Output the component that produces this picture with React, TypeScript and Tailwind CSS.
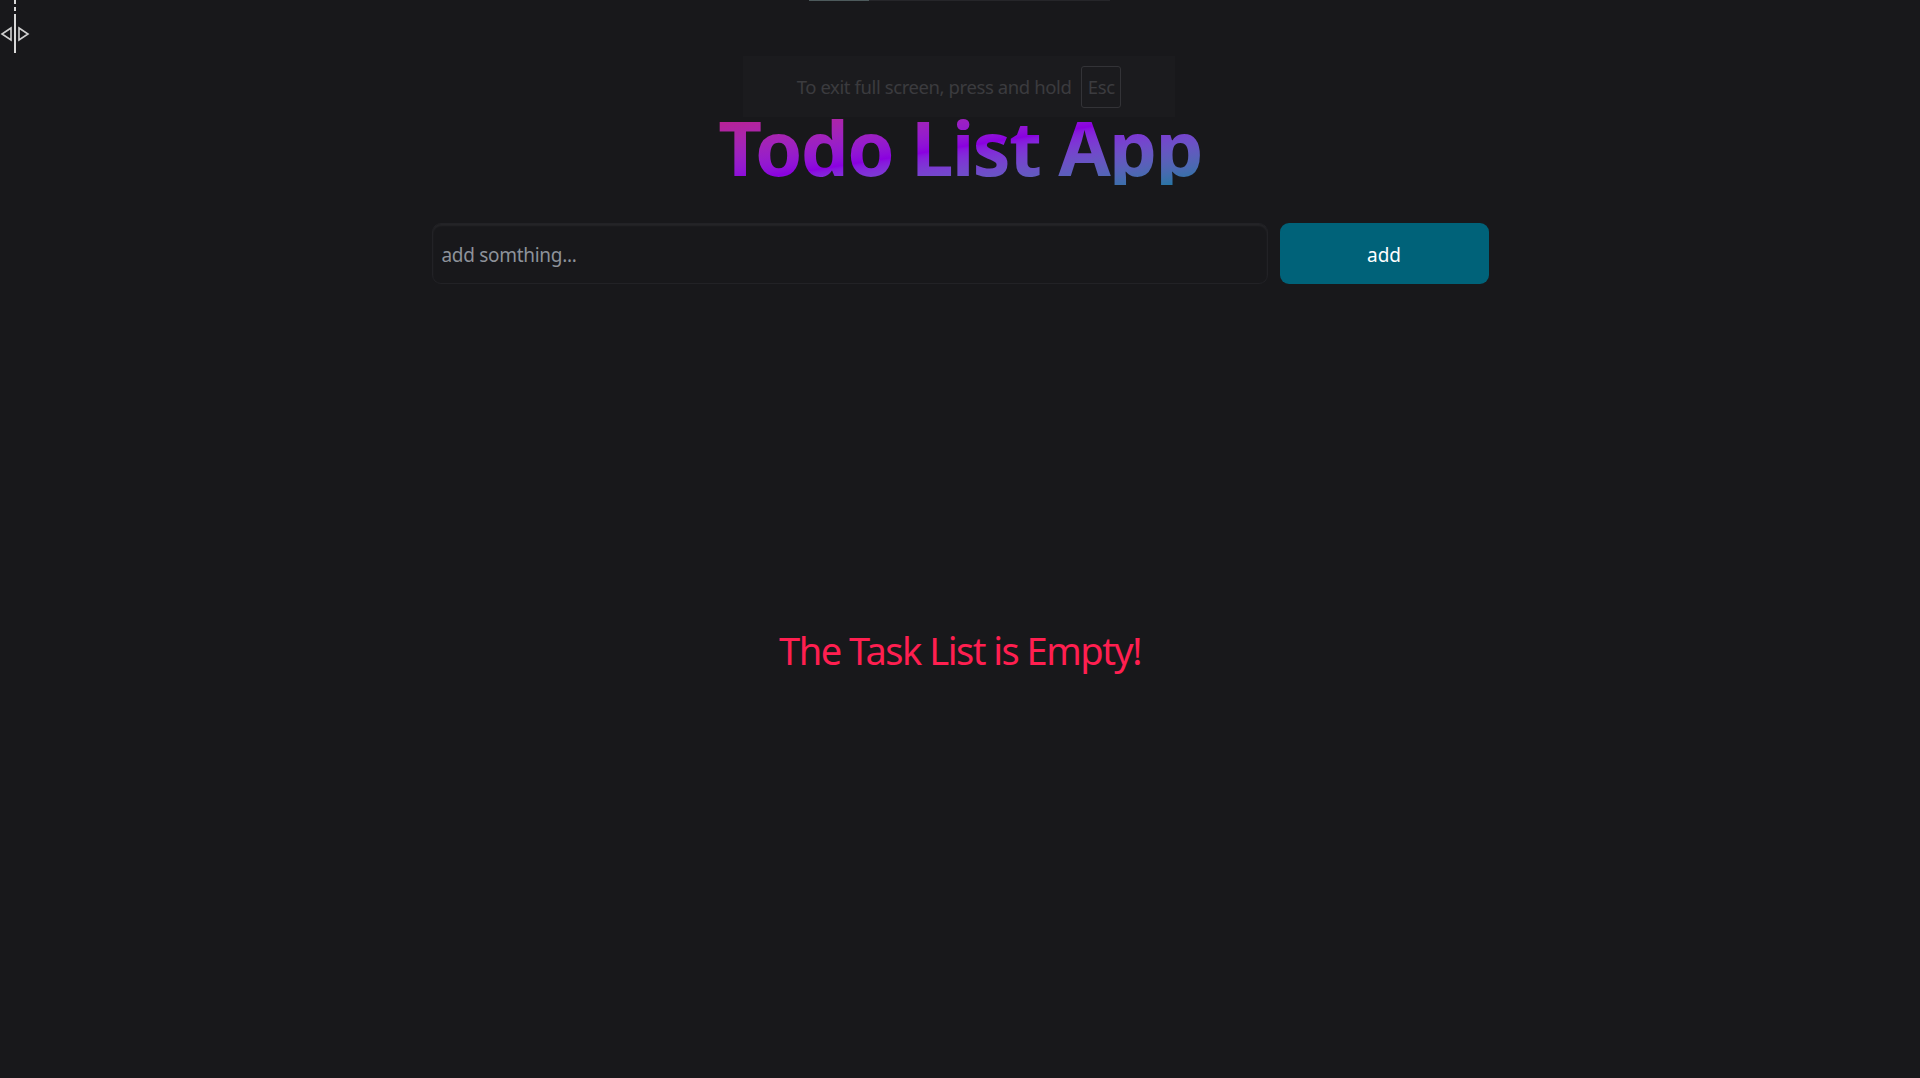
import React from "react";

export default function App() {
  return (
    <div
      className="relative min-h-[1078px] w-full overflow-hidden bg-[#18181b]"
      style={{ fontFamily: '"Noto Sans", "Open Sans", sans-serif' }}
    >
      {/* top thin bar */}
      <div className="absolute left-[809px] top-0 flex h-[1px] w-[301px] bg-[#26262a]">
        <div className="h-full w-[60px] bg-[#4d5a5c]" />
      </div>

      {/* cursor */}
      <svg className="absolute left-0 top-0" width="32" height="56" viewBox="0 0 32 56">
        <line x1="15" y1="0" x2="15" y2="4" stroke="#d8d8d8" strokeWidth="2" />
        <line x1="15" y1="7" x2="15" y2="11" stroke="#d8d8d8" strokeWidth="2" />
        <line x1="15" y1="14" x2="15" y2="53" stroke="#d8d8d8" strokeWidth="2" />
        <path d="M11 28 L2 34 L11 40 Z" fill="none" stroke="#d0d0d0" strokeWidth="1.6" />
        <path d="M19 28 L28 34 L19 40 Z" fill="none" stroke="#d0d0d0" strokeWidth="1.6" />
      </svg>

      {/* fullscreen notice */}
      <div className="absolute left-[743px] top-[56px] flex h-[61px] w-[432px] items-center justify-center gap-[10px] bg-[#1b1b1e]">
        <span className="text-[18.5px] tracking-[-0.4px] text-[#3b3b3f]">To exit full screen, press and hold</span>
        <span className="flex h-[42px] w-[40px] items-center justify-center rounded-[3px] border border-[#333337] text-[18.5px] tracking-[-0.3px] text-[#3b3b3f]">
          Esc
        </span>
      </div>

      <div className="flex flex-col items-center pt-[109px]">
        <h1 className="bg-linear-to-br from-[#c21a86] via-[#8a00e0] to-[#0f78a0] bg-clip-text text-[76px] font-bold leading-none tracking-[-1.75px] text-transparent">
          Todo List App
        </h1>

        <div className="mt-[38px] flex gap-[12px]">
          <input
            placeholder="add somthing..."
            className="h-[61px] w-[836px] rounded-[9px] border border-[#222226] bg-[#18181b] px-[9px] pt-[2px] text-[19px] tracking-[-0.3px] text-white shadow-[inset_0_2px_2px_rgba(255,255,255,0.06)] outline-none placeholder:text-[#8d929a]"
          />
          <button className="h-[61px] w-[209px] rounded-[9px] bg-[#006279] pt-[3px] text-[19px] text-white">
            add
          </button>
        </div>

        <p className="mt-[347px] text-[38px] leading-none tracking-[-1.5px] text-[#ff1f50]">The Task List is Empty!</p>
      </div>
    </div>
  );
}
